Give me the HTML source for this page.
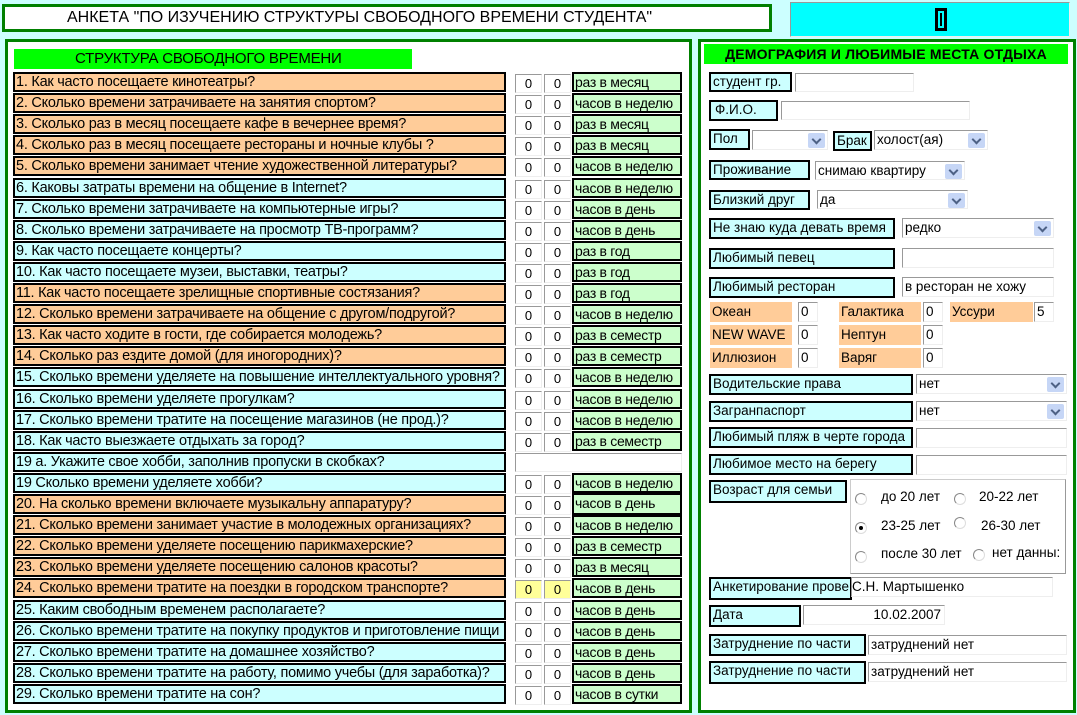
<!DOCTYPE html>
<html><head><meta charset="utf-8"><style>
*{box-sizing:border-box;margin:0;padding:0}
body{width:1077px;height:715px;background:#ccffff;position:relative;overflow:hidden;font-family:"Liberation Sans",sans-serif;font-size:13.5px;color:#000}
.a{position:absolute}
.pan{position:absolute;background:#fff;border:3px solid #008000}
.q{position:absolute;left:13px;width:493px;height:20px;border:2px solid #000;font-size:14.5px;line-height:16px;padding-left:1px;white-space:nowrap;overflow:hidden;letter-spacing:-0.25px}
.o{background:#ffcc99}.c{background:#ccffff}
.n{position:absolute;width:27px;height:19px;border:1px solid #999;border-right-color:#eee;border-bottom-color:#eee;background:#fff;text-align:center;font-size:13px;line-height:17px}
.u{position:absolute;left:572px;width:110px;height:20px;border:2px solid #000;background:#ccffcc;font-size:14px;line-height:16px;padding-left:1px;white-space:nowrap;overflow:hidden;letter-spacing:-0.3px}
.l{position:absolute;border:2px solid #000;background:#ccffff;line-height:16px;padding-left:2px;white-space:nowrap;overflow:hidden}
.i{position:absolute;background:#fff;border:1px solid #999;border-right-color:#eee;border-bottom-color:#eee;line-height:17px;padding-left:2px;white-space:nowrap;overflow:hidden}
.s .ar{position:absolute;right:2px;top:2px;width:17px;height:15px;background:#c6d6f6;border-radius:2px}
.s .ar:after{content:"";position:absolute;left:5px;top:3px;width:5px;height:5px;border-right:2px solid #4d6185;border-bottom:2px solid #4d6185;transform:rotate(45deg)}
.or{position:absolute;background:#ffcc99;height:20px;line-height:20px;padding-left:2px}
.r{position:absolute;width:12px;height:12px;border-radius:50%;border:1px solid #888;border-right-color:#ddd;border-bottom-color:#ddd;background:#fff}
.rt{position:absolute;line-height:14px}
</style></head><body>
<div class="a" style="left:2px;top:4px;width:770px;height:28px;background:#fff;border:3px solid #008000;font-size:16px;line-height:22px;padding-left:62px">АНКЕТА "ПО ИЗУЧЕНИЮ СТРУКТУРЫ СВОБОДНОГО ВРЕМЕНИ СТУДЕНТА"</div>
<div class="a" style="left:790px;top:2px;width:280px;height:35px;background:#00ffff;border:1px solid #999;border-right-color:#eee;border-bottom-color:#eee"><div class="a" style="left:144px;top:5px;width:12px;height:23px;background:#000"><div class="a" style="left:3px;top:3px;width:6px;height:17px;border:2px solid #0ff"></div></div></div>

<div class="pan" style="left:5px;top:39px;width:687px;height:674px"></div>
<div class="a" style="left:14px;top:49px;width:398px;height:20px;background:#00ff00;font-size:15px;line-height:20px;padding-left:61px;letter-spacing:-0.2px">СТРУКТУРА СВОБОДНОГО ВРЕМЕНИ</div>

<div class="q o" style="top:72px">1. Как часто посещаете кинотеатры?</div><div class="n" style="left:515px;top:74px">0</div><div class="n" style="left:544px;top:74px">0</div><div class="u" style="top:72px">раз в месяц</div>
<div class="q o" style="top:93px">2. Сколько времени затрачиваете на занятия спортом?</div><div class="n" style="left:515px;top:95px">0</div><div class="n" style="left:544px;top:95px">0</div><div class="u" style="top:93px">часов в неделю</div>
<div class="q o" style="top:114px">3. Сколько раз в месяц посещаете кафе в вечернее время?</div><div class="n" style="left:515px;top:116px">0</div><div class="n" style="left:544px;top:116px">0</div><div class="u" style="top:114px">раз в месяц</div>
<div class="q o" style="top:135px">4. Сколько раз в месяц посещаете  рестораны и ночные клубы ?</div><div class="n" style="left:515px;top:137px">0</div><div class="n" style="left:544px;top:137px">0</div><div class="u" style="top:135px">раз в месяц</div>
<div class="q o" style="top:156px">5. Сколько времени занимает чтение художественной литературы?</div><div class="n" style="left:515px;top:158px">0</div><div class="n" style="left:544px;top:158px">0</div><div class="u" style="top:156px">часов в неделю</div>
<div class="q c" style="top:178px">6. Каковы затраты времени на общение в Internet?</div><div class="n" style="left:515px;top:180px">0</div><div class="n" style="left:544px;top:180px">0</div><div class="u" style="top:178px">часов в неделю</div>
<div class="q c" style="top:199px">7. Сколько времени затрачиваете на компьютерные игры?</div><div class="n" style="left:515px;top:201px">0</div><div class="n" style="left:544px;top:201px">0</div><div class="u" style="top:199px">часов в день</div>
<div class="q c" style="top:220px">8. Сколько времени затрачиваете на просмотр ТВ-программ?</div><div class="n" style="left:515px;top:222px">0</div><div class="n" style="left:544px;top:222px">0</div><div class="u" style="top:220px">часов в день</div>
<div class="q c" style="top:241px">9. Как часто посещаете концерты?</div><div class="n" style="left:515px;top:243px">0</div><div class="n" style="left:544px;top:243px">0</div><div class="u" style="top:241px">раз в год</div>
<div class="q c" style="top:262px">10. Как часто посещаете музеи, выставки, театры?</div><div class="n" style="left:515px;top:264px">0</div><div class="n" style="left:544px;top:264px">0</div><div class="u" style="top:262px">раз в год</div>
<div class="q o" style="top:283px">11. Как часто посещаете зрелищные спортивные состязания?</div><div class="n" style="left:515px;top:285px">0</div><div class="n" style="left:544px;top:285px">0</div><div class="u" style="top:283px">раз в год</div>
<div class="q o" style="top:304px">12. Сколько времени затрачиваете на общение с другом/подругой?</div><div class="n" style="left:515px;top:306px">0</div><div class="n" style="left:544px;top:306px">0</div><div class="u" style="top:304px">часов в неделю</div>
<div class="q o" style="top:325px">13. Как часто ходите в гости, где собирается молодежь?</div><div class="n" style="left:515px;top:327px">0</div><div class="n" style="left:544px;top:327px">0</div><div class="u" style="top:325px">раз в семестр</div>
<div class="q o" style="top:346px">14. Сколько раз ездите домой (для иногородних)?</div><div class="n" style="left:515px;top:348px">0</div><div class="n" style="left:544px;top:348px">0</div><div class="u" style="top:346px">раз в семестр</div>
<div class="q c" style="top:367px">15. Сколько времени уделяете на повышение интеллектуального уровня?</div><div class="n" style="left:515px;top:369px">0</div><div class="n" style="left:544px;top:369px">0</div><div class="u" style="top:367px">часов в неделю</div>
<div class="q c" style="top:389px">16. Сколько времени уделяете прогулкам?</div><div class="n" style="left:515px;top:391px">0</div><div class="n" style="left:544px;top:391px">0</div><div class="u" style="top:389px">часов в неделю</div>
<div class="q c" style="top:410px">17. Сколько времени тратите на посещение магазинов (не прод.)?</div><div class="n" style="left:515px;top:412px">0</div><div class="n" style="left:544px;top:412px">0</div><div class="u" style="top:410px">часов в неделю</div>
<div class="q c" style="top:431px">18. Как часто выезжаете отдыхать за город?</div><div class="n" style="left:515px;top:433px">0</div><div class="n" style="left:544px;top:433px">0</div><div class="u" style="top:431px">раз в семестр</div>
<div class="q c" style="top:452px">19 а. Укажите свое хобби, заполнив пропуски в скобках?</div><div class="n" style="left:515px;top:453px;width:167px"></div>
<div class="q c" style="top:473px">19 Сколько времени уделяете хобби?</div><div class="n" style="left:515px;top:475px">0</div><div class="n" style="left:544px;top:475px">0</div><div class="u" style="top:473px">часов в неделю</div>
<div class="q o" style="top:494px">20. На сколько времени включаете музыкальну аппаратуру?</div><div class="n" style="left:515px;top:496px">0</div><div class="n" style="left:544px;top:496px">0</div><div class="u" style="top:493px;height:22px">часов в день</div>
<div class="q o" style="top:515px">21. Сколько времени занимает участие в молодежных организациях?</div><div class="n" style="left:515px;top:517px">0</div><div class="n" style="left:544px;top:517px">0</div><div class="u" style="top:515px">часов в неделю</div>
<div class="q o" style="top:536px">22. Сколько времени уделяете посещению парикмахерские?</div><div class="n" style="left:515px;top:538px">0</div><div class="n" style="left:544px;top:538px">0</div><div class="u" style="top:536px">раз в семестр</div>
<div class="q o" style="top:557px">23. Сколько времени уделяете посещению салонов красоты?</div><div class="n" style="left:515px;top:559px">0</div><div class="n" style="left:544px;top:559px">0</div><div class="u" style="top:557px">раз в месяц</div>
<div class="q o" style="top:578px">24. Сколько времени тратите на поездки в городском транспорте?</div><div class="n" style="left:515px;top:580px;background:#ffff99">0</div><div class="n" style="left:544px;top:580px;background:#ffff99">0</div><div class="u" style="top:578px">часов в день</div>
<div class="q c" style="top:600px">25. Каким свободным временем располагаете?</div><div class="n" style="left:515px;top:602px">0</div><div class="n" style="left:544px;top:602px">0</div><div class="u" style="top:600px">часов в день</div>
<div class="q c" style="top:621px">26. Сколько времени тратите на покупку продуктов и приготовление пищи</div><div class="n" style="left:515px;top:623px">0</div><div class="n" style="left:544px;top:623px">0</div><div class="u" style="top:621px">часов в день</div>
<div class="q c" style="top:642px">27. Сколько времени тратите на домашнее хозяйство?</div><div class="n" style="left:515px;top:644px">0</div><div class="n" style="left:544px;top:644px">0</div><div class="u" style="top:642px">часов в день</div>
<div class="q c" style="top:663px">28. Сколько времени тратите на работу, помимо учебы (для заработка)?</div><div class="n" style="left:515px;top:665px">0</div><div class="n" style="left:544px;top:665px">0</div><div class="u" style="top:663px">часов в день</div>
<div class="q c" style="top:684px">29. Сколько времени тратите на сон?</div><div class="n" style="left:515px;top:686px">0</div><div class="n" style="left:544px;top:686px">0</div><div class="u" style="top:684px">часов в сутки</div>

<div class="pan" style="left:698px;top:39px;width:378px;height:674px"></div>
<div class="a" style="left:704px;top:44px;width:364px;height:20px;background:#00ff00;font-weight:bold;font-size:14px;line-height:20px;text-align:center;letter-spacing:0.2px">ДЕМОГРАФИЯ И ЛЮБИМЫЕ МЕСТА ОТДЫХА</div>

<div class="l" style="left:709px;top:72px;width:83px;height:20px">студент гр.</div><div class="i" style="left:795px;top:73px;width:119px;height:19px"></div>
<div class="l" style="left:709px;top:100px;width:69px;height:21px;padding-left:4px">Ф.И.О.</div><div class="i" style="left:781px;top:101px;width:189px;height:19px"></div>
<div class="l" style="left:709px;top:129px;width:41px;height:21px">Пол</div><div class="i s" style="left:752px;top:130px;width:76px;height:20px"><span class="ar"></span></div>
<div class="l" style="left:833px;top:131px;width:39px;height:20px">Брак</div><div class="i s" style="left:874px;top:130px;width:114px;height:20px">холост(ая)<span class="ar"></span></div>
<div class="l" style="left:709px;top:160px;width:101px;height:20px">Проживание</div><div class="i s" style="left:815px;top:161px;width:150px;height:19px">снимаю квартиру<span class="ar"></span></div>
<div class="l" style="left:709px;top:190px;width:101px;height:20px">Близкий друг</div><div class="i s" style="left:817px;top:190px;width:151px;height:19px">да<span class="ar"></span></div>
<div class="l" style="left:709px;top:218px;width:186px;height:21px">Не знаю куда девать время</div><div class="i s" style="left:902px;top:218px;width:152px;height:20px">редко<span class="ar"></span></div>
<div class="l" style="left:709px;top:248px;width:186px;height:21px">Любимый  певец</div><div class="i" style="left:902px;top:248px;width:152px;height:20px"></div>
<div class="l" style="left:709px;top:277px;width:186px;height:21px">Любимый ресторан</div><div class="i" style="left:902px;top:277px;width:152px;height:20px">в ресторан не хожу</div>

<div class="or" style="left:710px;top:302px;width:82px">Океан</div><div class="i" style="left:798px;top:302px;width:20px;height:20px">0</div>
<div class="or" style="left:839px;top:302px;width:82px">Галактика</div><div class="i" style="left:923px;top:302px;width:20px;height:20px">0</div>
<div class="or" style="left:950px;top:302px;width:83px">Уссури</div><div class="i" style="left:1034px;top:302px;width:20px;height:20px">5</div>
<div class="or" style="left:710px;top:325px;width:82px">NEW WAVE</div><div class="i" style="left:798px;top:325px;width:20px;height:20px">0</div>
<div class="or" style="left:839px;top:325px;width:82px">Нептун</div><div class="i" style="left:923px;top:325px;width:20px;height:20px">0</div>
<div class="or" style="left:710px;top:348px;width:82px">Иллюзион</div><div class="i" style="left:798px;top:348px;width:20px;height:20px">0</div>
<div class="or" style="left:839px;top:348px;width:82px">Варяг</div><div class="i" style="left:923px;top:348px;width:20px;height:20px">0</div>

<div class="l" style="left:709px;top:374px;width:204px;height:21px">Водительские права</div><div class="i s" style="left:916px;top:374px;width:151px;height:20px">нет<span class="ar"></span></div>
<div class="l" style="left:709px;top:401px;width:204px;height:21px">Загранпаспорт</div><div class="i s" style="left:916px;top:401px;width:151px;height:20px">нет<span class="ar"></span></div>
<div class="l" style="left:709px;top:427px;width:204px;height:21px">Любимый пляж в черте города</div><div class="i" style="left:916px;top:428px;width:151px;height:20px"></div>
<div class="l" style="left:709px;top:454px;width:204px;height:21px">Любимое место на берегу</div><div class="i" style="left:916px;top:455px;width:151px;height:20px"></div>
<div class="l" style="left:709px;top:480px;width:138px;height:23px">Возраст для семьи</div>
<div class="a" style="left:850px;top:479px;width:216px;height:95px;border:1px solid #999;border-left-color:#ccc;border-top-color:#ccc;background:#fff"></div>
<div class="r" style="left:855px;top:493px"></div><div class="rt" style="left:881px;top:490px">до 20 лет</div>
<div class="r" style="left:954px;top:493px"></div><div class="rt" style="left:979px;top:490px">20-22 лет</div>
<div class="r" style="left:855px;top:522px"><div class="a" style="left:3px;top:3px;width:4px;height:4px;background:#000;border-radius:50%"></div></div><div class="rt" style="left:881px;top:519px">23-25 лет</div>
<div class="r" style="left:954px;top:517px"></div><div class="rt" style="left:981px;top:519px">26-30 лет</div>
<div class="r" style="left:855px;top:551px"></div><div class="rt" style="left:881px;top:547px">после 30 лет</div>
<div class="r" style="left:973px;top:549px"></div><div class="rt" style="left:992px;top:546px">нет данны:</div>

<div class="l" style="left:709px;top:577px;width:143px;height:23px">Анкетирование прове</div><div class="i" style="left:851px;top:577px;width:202px;height:20px;padding-left:0">С.Н. Мартышенко</div>
<div class="l" style="left:709px;top:605px;width:92px;height:22px">Дата</div><div class="i" style="left:803px;top:605px;width:142px;height:20px;text-align:right;padding-right:3px">10.02.2007</div>
<div class="l" style="left:709px;top:634px;width:157px;height:22px">Затруднение по части</div><div class="i" style="left:868px;top:635px;width:199px;height:20px">затруднений нет</div>
<div class="l" style="left:709px;top:661px;width:157px;height:23px">Затруднение по части</div><div class="i" style="left:868px;top:662px;width:199px;height:20px">затруднений нет</div>
</body></html>
